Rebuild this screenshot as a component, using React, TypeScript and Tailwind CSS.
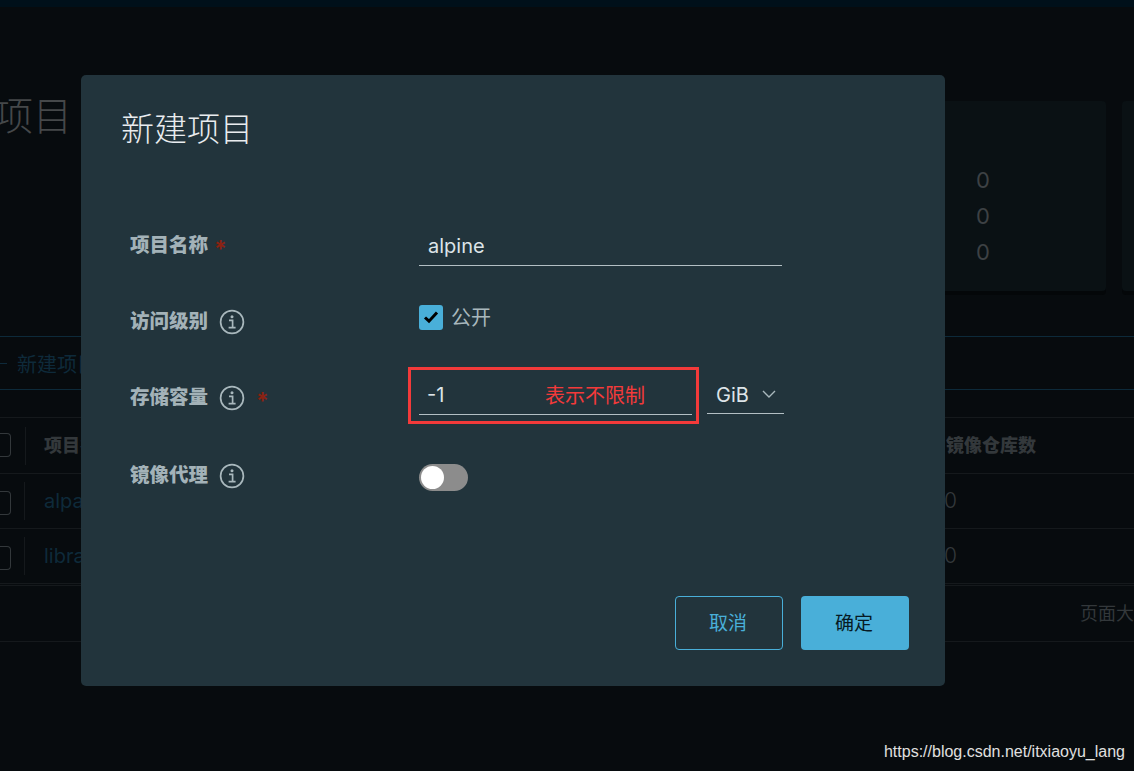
import React from "react";

const sans = "font-['Inter','Noto_Sans_CJK_SC',sans-serif]";

function InfoIcon() {
  return (
    <svg width="26" height="26" viewBox="0 0 26 26" fill="none" className="shrink-0">
      <circle cx="13" cy="13" r="11.4" stroke="#a9b8bd" strokeWidth="1.7" />
      <circle cx="13" cy="7.8" r="1.5" fill="#a9b8bd" />
      <path d="M10 11.3h3.6v7.2M9.6 18.7h7" stroke="#a9b8bd" strokeWidth="1.7" />
    </svg>
  );
}

function Star() {
  return <span className="text-[#8a2213] text-[23px] font-bold leading-none">*</span>;
}

function Label({ text, info, star }: { text: string; info?: boolean; star?: boolean }) {
  return (
    <div className="w-[289px] shrink-0 flex items-center">
      <span className="text-[19.5px] font-black text-[#a3b2b8] leading-none">{text}</span>
      {info && <span className="ml-[11px] flex"><InfoIcon /></span>}
      {star && <span className={info ? "ml-[11px] mt-[9px]" : "ml-[6px] mt-[9px]"}><Star /></span>}
    </div>
  );
}

function TableRow({ name }: { name: string }) {
  return (
    <div className="h-[55px] border-b border-[#15191c] flex items-center">
      <div className="w-[11px] h-[24px] mt-[4px] border border-l-0 border-[#33383b] rounded-r-[4px]" />
      <div className="ml-[13px] w-px h-[38px] bg-[#15191c]" />
      <span className="ml-[19px] text-[20px] text-[#0e2a3a]">{name}</span>
      <span className="ml-auto mr-[177px] text-[21px] font-light text-[#33383b]">0</span>
    </div>
  );
}

export default function App() {
  return (
    <div className={`relative w-[1134px] h-[771px] overflow-hidden bg-[#070b0e] ${sans}`}>
      {/* dimmed page behind the dialog */}
      <div className="h-[7px] bg-[#00101a]" />
      <div className="flex items-start h-[329px]">
        <div className="ml-[-6px] mt-[84px] text-[39px] leading-[50px] font-light text-[#45484a]">项目</div>
        <div className="ml-auto flex gap-[16px] mt-[94px] mr-[-138px]">
          <div className="w-[170px] h-[190px] rounded-[4px] bg-[#0a1114] shadow-[0_4px_0_#040709] flex flex-col pl-[40px] pt-[69px] gap-[15px] text-[22px] leading-[21px] text-[#3d4144]">
            <span>0</span>
            <span>0</span>
            <span>0</span>
          </div>
          <div className="w-[150px] h-[190px] rounded-[4px] bg-[#0a1114] shadow-[0_4px_0_#040709]" />
        </div>
      </div>
      <div className="h-[54px] border-y border-[#0d2a3a] flex items-center text-[20px] text-[#0e2a3a]">
        <span className="w-[7px] h-px bg-[#0e2a3a]" />
        <span className="ml-[10px] mt-[3px]">新建项目</span>
      </div>
      <div className="mt-[27px] border-t border-[#15191c]">
        <div className="h-[56px] border-b border-[#15191c] flex items-center">
          <div className="w-[11px] h-[24px] -mt-[2px] border border-l-0 border-[#33383b] rounded-r-[4px]" />
          <div className="ml-[14px] w-px h-[38px] bg-[#15191c]" />
          <span className="ml-[18px] text-[18px] font-black text-[#33383b]">项目名称</span>
          <span className="ml-auto mr-[98px] text-[18px] font-black text-[#33383b]">镜像仓库数</span>
        </div>
        <TableRow name="alpaca" />
        <TableRow name="library" />
        <div className="mt-[1px] border-t border-[#15191c] h-[57px] border-b flex items-center justify-end">
          <span className="mr-[-28px] whitespace-nowrap w-[82px] text-[18px] text-[#33383b] overflow-hidden">页面大小</span>
        </div>
      </div>

      {/* dialog */}
      <div className="absolute left-[81px] top-[75px] w-[864px] h-[611px] rounded-[5px] bg-[#22343c] flex flex-col">
        <h1 className="ml-[40px] mt-[30px] text-[33px] leading-[48px] font-light text-[#e9ecef]">新建项目</h1>
        <div className="ml-[49px] mt-[67px] flex flex-col">
          <div className="flex items-center h-[52px]">
            <Label text="项目名称" star />
            <div className="w-[363px] h-[40px] border-b border-[#b3bfc4] pl-[9px] flex items-center text-[20px] text-[#dde4e8]">alpine</div>
          </div>
          <div className="flex items-center h-[52px] mt-[24px]">
            <Label text="访问级别" info />
            <div className="flex items-center gap-[8px] -mt-[10px]">
              <span className="w-[24px] h-[25px] rounded-[3px] bg-[#49afd9] flex items-center justify-center">
                <svg width="16" height="14" viewBox="0 0 16 14" fill="none">
                  <path d="M2 7.5 6 11.2 14 2.6" stroke="#000" strokeWidth="3" />
                </svg>
              </span>
              <span className="text-[20px] pt-[2px] text-[#a9b8bd] leading-none">公开</span>
            </div>
          </div>
          <div className="flex items-center h-[52px] mt-[24px]">
            <Label text="存储容量" info star />
            <div className="w-[273px] h-[40px] -mt-[6px] border-b border-[#b3bfc4] pl-[8px] flex items-center text-[20px] text-[#dde4e8]">-1</div>
            <div className="ml-[15px] w-[77px] h-[40px] -mt-[8px] border-b border-[#b3bfc4] pl-[9px] pt-[3px] flex items-center text-[20px] text-[#dde4e8]">
              GiB
              <svg width="14" height="8" viewBox="0 0 14 8" fill="none" className="ml-[13px] -mt-[3px]">
                <path d="M1 1l6 6 6-6" stroke="#a9b8bd" strokeWidth="1.4" />
              </svg>
            </div>
          </div>
          <div className="flex items-center h-[52px] mt-[26px]">
            <Label text="镜像代理" info />
            <div className="w-[49px] h-[27px] rounded-full bg-[#8c8c8c] p-[2px] mt-[2px]">
              <div className="w-[23px] h-[23px] rounded-full bg-white" />
            </div>
          </div>
        </div>
        <div className="mt-auto mb-[36px] mr-[36px] flex justify-end gap-[18px]">
          <button className="w-[108px] h-[54px] rounded-[4px] border border-[#49afd9] pt-[3px] pr-[2px] text-[19px] text-[#49afd9]">取消</button>
          <button className="w-[108px] h-[54px] rounded-[4px] bg-[#49afd9] pt-[3px] pr-[2px] text-[19px] text-[#071a24]">确定</button>
        </div>
      </div>

      {/* red annotation drawn on the screenshot */}
      <div className="absolute left-[408px] top-[367px] w-[291px] h-[57px] border-[3px] border-[#f33a3a] flex items-center pl-[134px]">
        <span className="text-[20px] text-[#f33a3a] leading-none">表示不限制</span>
      </div>

      {/* watermark */}
      <div className="absolute right-[9px] bottom-[9px] font-['Liberation_Sans',sans-serif] text-[16px] leading-[20px] text-[#e0e0e0]">
        https://blog.csdn.net/itxiaoyu_lang
      </div>
    </div>
  );
}
